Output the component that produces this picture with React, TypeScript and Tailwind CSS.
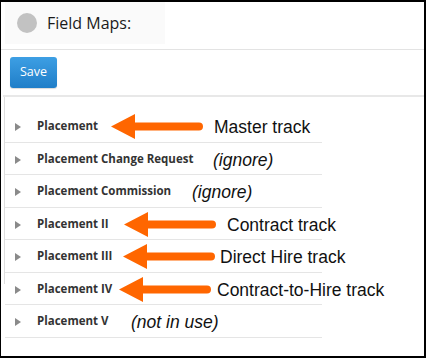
import React from "react";

type Row = { label: string; arrow?: number; text?: string; textX?: number; italic?: boolean };

const rows: Row[] = [
  { label: "Placement", arrow: 106, text: "Master track", textX: 209 },
  { label: "Placement Change Request", text: "(ignore)", textX: 208, italic: true },
  { label: "Placement Commission", text: "(ignore)", textX: 187, italic: true },
  { label: "Placement II", arrow: 119, text: "Contract track", textX: 222 },
  { label: "Placement III", arrow: 118, text: "Direct Hire track", textX: 215 },
  { label: "Placement IV", arrow: 114, text: "Contract-to-Hire track", textX: 212 },
  { label: "Placement V", text: "(not in use)", textX: 126, italic: true },
];

function Arrow() {
  return (
    <svg width="92" height="25" viewBox="0 0 92 25">
      <path d="M0 12.5 L24 0 L24 8.5 L88 8.5 A4 4 0 0 1 88 16.5 L24 16.5 L24 25 Z" fill="#ff6600" />
    </svg>
  );
}

export default function App() {
  return (
    <div
      className="w-[426px] h-[358px] bg-white border-black border-t-2 border-r-2 border-b-2 border-l overflow-hidden"
      style={{ fontFamily: '"Open Sans", sans-serif' }}
    >
      <div className="h-[48px] border-b border-[#e3e3e3]">
        <div className="ml-[4px] w-[160px] h-[42px] bg-[#fafafa] flex items-center">
          <div className="ml-[12px] w-[20px] h-[20px] rounded-full bg-[#c2c2c2]" />
          <span className="ml-[10px] text-[16px] text-[#1a1a1a] leading-none">Field Maps:</span>
        </div>
      </div>
      <div className="h-[47px] pt-[7px] pl-[7px] border-b-2 border-[#e8e8e8] ml-[2px]">
        <button className="w-[47px] h-[31px] rounded-[3px] bg-gradient-to-b from-[#3d9fe4] to-[#1f7ec8] text-white text-[12.5px] leading-none shadow-[0_1px_1px_rgba(0,0,0,0.15)]">
          Save
        </button>
      </div>
      <div className="flex">
        <div className="ml-[3px] w-px h-[187px] bg-[#dedede] shrink-0" />
        <div className="pt-[13px]">
          {rows.map((r) => (
            <div
              key={r.label}
              className="relative w-[317px] h-[32.5px] border-b border-[#e5e5e5] flex items-center"
            >
              <svg width="6" height="8" viewBox="0 0 6 8" className="ml-[10px] mt-[3px] shrink-0">
                <path d="M0 0 L6 4 L0 8 Z" fill="#8a8a8a" />
              </svg>
              <span className="ml-[16px] text-[11.5px] font-bold text-[#333] whitespace-nowrap">{r.label}</span>
              {r.arrow !== undefined && (
                <div className="absolute top-[4px]" style={{ left: r.arrow }}>
                  <Arrow />
                </div>
              )}
              {r.text && (
                <span
                  className={`absolute whitespace-nowrap text-[17.5px] text-[#111] leading-none ${r.italic ? "italic" : ""}`}
                  style={{ left: r.textX, top: 9, fontFamily: '"Liberation Sans", Arial, sans-serif' }}
                >
                  {r.text}
                </span>
              )}
            </div>
          ))}
        </div>
      </div>
    </div>
  );
}
